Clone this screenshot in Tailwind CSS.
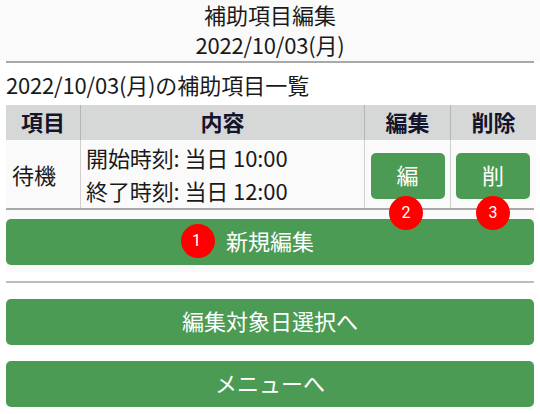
<!DOCTYPE html>
<html lang="ja">
<head>
  <meta charset="UTF-8" />
  <title>補助項目編集</title>
  <script src="https://cdn.jsdelivr.net/npm/@tailwindcss/browser@4"></script>
</head>
<body class="bg-white font-['Noto_Sans_CJK_JP',sans-serif] text-[22px] text-[#1a1a1a] overflow-hidden">
  <div class="w-[540px] h-[414px] px-[6px] overflow-hidden">
    <!-- Header -->
    <header class="bg-[#fafafa] -mx-[6px] h-[61px] text-center">
      <div class="leading-[28px]">補助項目編集</div>
      <div class="leading-[33px] tracking-[-0.2px]">2022/10/03(月)</div>
    </header>
    <hr class="border-0 h-[2px] bg-[#a9a9a9]" />

    <p class="mt-[3px] mb-[2px] h-[37px] leading-[37px]"><span class="tracking-[-0.2px]">2022/10/03(月)</span>の補助項目一覧</p>

    <!-- Table -->
    <div class="grid grid-cols-[74px_284px_86px_86px] border-b-2 border-[#a9a9a9] h-[105px] grid-rows-[35px_68px]">
      <div class="bg-[#d6d8d8] font-bold text-[#14142b] flex items-center justify-center pb-[2px]">項目</div>
      <div class="bg-[#d6d8d8] border-l border-[#b5b5b5] font-bold text-[#14142b] flex items-center justify-center pb-[2px]">内容</div>
      <div class="bg-[#d6d8d8] border-l border-[#b5b5b5] font-bold text-[#14142b] flex items-center justify-center pb-[2px]">編集</div>
      <div class="bg-[#d6d8d8] border-l border-[#b5b5b5] font-bold text-[#14142b] flex items-center justify-center pb-[2px]">削除</div>

      <div class="bg-[#fafafa] flex items-center pl-[6px]">待機</div>
      <div class="bg-[#fafafa] border-l border-[#cfcfcf] flex flex-col justify-center pl-[5px] leading-[33px] tracking-[-0.1px]">
        <div>開始時刻: 当日 10:00</div>
        <div>終了時刻: 当日 12:00</div>
      </div>
      <div class="bg-[#fafafa] border-l border-[#cfcfcf] flex items-start justify-center pt-[13px] relative">
        <button class="w-[74px] h-[46px] pb-[3px] rounded-[5px] bg-[#4c9b54] text-white">編</button>
        <span class="absolute z-10 left-[24px] top-[56px] w-[34px] h-[34px] rounded-full bg-[#ff0000] text-white text-[16px] font-['Roboto',sans-serif] flex items-center justify-center">2</span>
      </div>
      <div class="bg-[#fafafa] border-l border-[#cfcfcf] flex items-start justify-center pt-[13px] pr-[1px] relative">
        <button class="w-[74px] h-[46px] pb-[3px] rounded-[5px] bg-[#4c9b54] text-white">削</button>
        <span class="absolute z-10 left-[25px] top-[56px] w-[34px] h-[34px] rounded-full bg-[#ff0000] text-white text-[16px] font-['Roboto',sans-serif] flex items-center justify-center">3</span>
      </div>
    </div>

    <!-- Buttons -->
    <div class="bg-[#fafafa] pt-[9px] pb-[7px]">
      <button class="relative w-full h-[46px] pb-[3px] rounded-[5px] bg-[#4c9b54] text-white">
        新規編集
        <span class="absolute left-[175px] top-[5px] w-[34px] h-[34px] pr-[3px] rounded-full bg-[#ff0000] text-white text-[16px] font-['Roboto',sans-serif] flex items-center justify-center">1</span>
      </button>
    </div>
    <hr class="mt-[9px] border-0 h-[2px] bg-[#bdbdbd]" />
    <button class="block mt-[16px] w-full h-[46px] pb-[3px] rounded-[5px] bg-[#4c9b54] text-white">編集対象日選択へ</button>
    <button class="block mt-[16px] w-full h-[46px] pb-[3px] rounded-[5px] bg-[#4c9b54] text-white">メニューへ</button>
  </div>
</body>
</html>
